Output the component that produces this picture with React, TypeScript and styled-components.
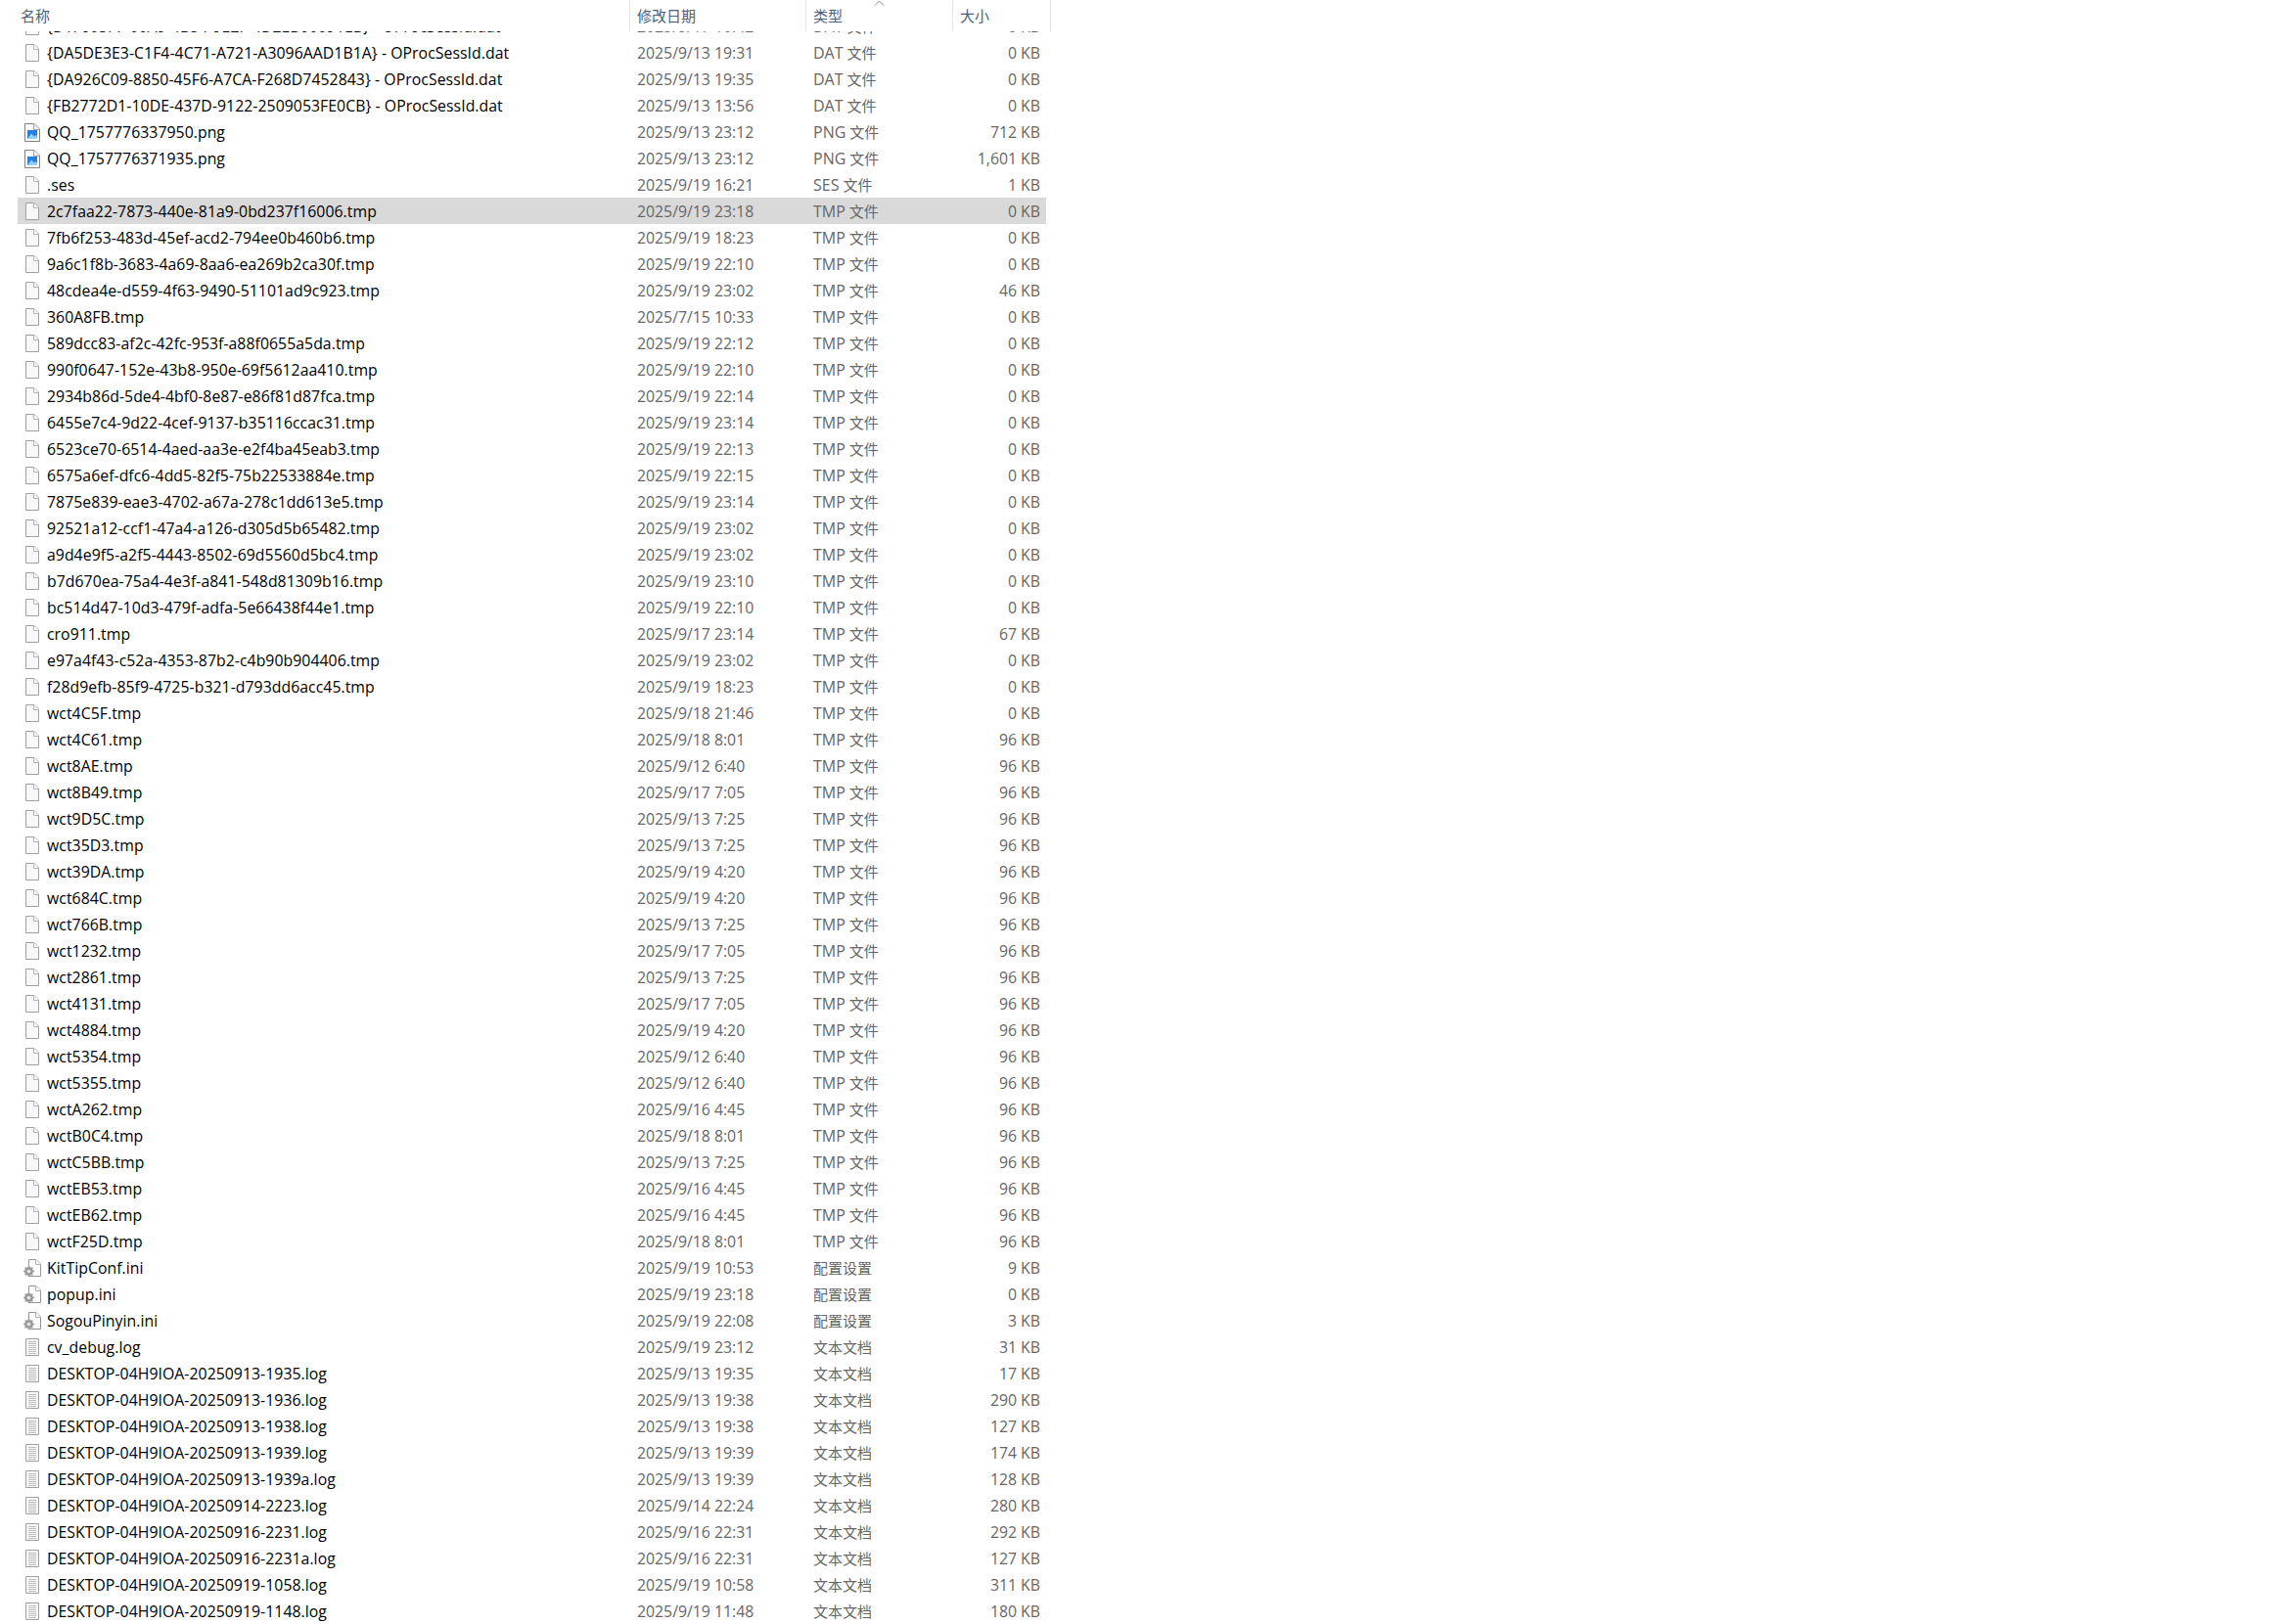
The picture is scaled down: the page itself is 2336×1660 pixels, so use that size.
import React from "react";
import styled, { createGlobalStyle } from "styled-components";

const Global = createGlobalStyle`
  html, body { margin: 0; padding: 0; background: #fff; overflow: hidden; }
  body { font-family: "Open Sans", "Noto Sans CJK SC", sans-serif; }
`;

const COLUMNS = "625px 180px 150px 96px";

const Page = styled.div`
  width: 2336px;
  height: 1660px;
  overflow: hidden;
  background: #fff;
`;

const Header = styled.div`
  position: relative;
  z-index: 1;
  display: grid;
  grid-template-columns: 625px 180px 150px 100px 5px;
  height: 32px;
  width: 1060px;
  margin-left: 18px;
  background: #fff;
`;

const HeaderCell = styled.div<{ $first?: boolean }>`
  position: relative;
  display: flex;
  align-items: center;
  height: 32px;
  box-sizing: border-box;
  padding-left: ${(p) => (p.$first ? "3px" : "7px")};
  padding-bottom: 2px;
  border-left: ${(p) => (p.$first ? "none" : "1px solid #e5e5e5")};
  font-family: "Noto Sans CJK SC", sans-serif;
  font-size: 15px;
  color: #4c607a;
`;

const HeaderEnd = styled.div`
  border-left: 1px solid #e5e5e5;
  height: 32px;
`;

const SortArrow = styled.svg`
  position: absolute;
  top: 0;
  left: 69px;
  width: 11px;
  height: 6px;
`;

const Viewport = styled.div`
  height: 1628px;
  overflow: hidden;
`;

const List = styled.div`
  margin-top: -19px;
  margin-left: 18px;
  width: 1051px;
`;

const Row = styled.div<{ $selected?: boolean }>`
  display: grid;
  grid-template-columns: ${COLUMNS};
  height: 27px;
  align-items: center;
  background: ${(p) => (p.$selected ? "#d9d9d9" : "transparent")};
  font-size: 15.8px;
`;

const NameCell = styled.div`
  display: flex;
  align-items: center;
  gap: 6px;
  padding-left: 6px;
  color: #000;
  letter-spacing: 0.05px;
  white-space: nowrap;
`;

const IconSlot = styled.svg`
  flex: none;
  width: 18px;
  height: 20px;
`;

const DateCell = styled.div`
  padding-left: 8px;
  color: #666;
  white-space: nowrap;
`;

const TypeCell = styled.div`
  display: flex;
  align-items: center;
  gap: 4px;
  padding-left: 8px;
  color: #666;
  font-size: 15px;
  white-space: nowrap;
`;

const TypeCode = styled.span`
  font-size: 16px;
`;

const SizeCell = styled.div`
  padding-right: 6px;
  text-align: right;
  color: #666;
  white-space: nowrap;
`;

type Kind = "blank" | "png" | "ini" | "log";

const Sheet = () => (
  <>
    <path d="M2.5 1.5H11L15.5 6V18.5H2.5Z" fill="#f8f8f8" stroke="#a0a0a0" />
    <path d="M10.5 1.5V6.5H15.5" fill="#fff" stroke="#b4b4b4" />
  </>
);

const FileIcon = ({ kind }: { kind: Kind }) => (
  <IconSlot viewBox="0 0 18 20">
    {kind === "blank" && <Sheet />}
    {kind === "log" && (
      <>
        <path d="M2.5 1.5H15.5V18.5H2.5Z" fill="#f8f8f8" stroke="#a0a0a0" />
        {[4, 6, 8, 10, 12, 14, 16].map((y) => (
          <path key={y} d={`M5 ${y}.5H13`} stroke="#bdbdbd" />
        ))}
      </>
    )}
    {kind === "png" && (
      <>
        <path d="M1.5 1.5H11L16.5 7V19.5H1.5Z" fill="#fff" stroke="#808080" />
        <path d="M10.5 1.5V7.5H16.5" fill="#f2f2f2" stroke="#a0a0a0" />
        <rect x="4" y="8" width="10" height="9" fill="#2a7de1" />
        <path d="M4 17L8 11.5L11 14.5L12.5 13L14 15V17Z" fill="#8fd3fb" />
      </>
    )}
    {kind === "ini" && (
      <>
        <path d="M5.5 1.5H13L17.5 6V18.5H5.5Z" fill="#fcfcfc" stroke="#969696" />
        <path d="M12.5 1.5V6.5H17.5" fill="#fff" stroke="#b0b0b0" />
        <circle cx="5.5" cy="13.5" r="4.4" fill="#8d9092" />
        <path
          d="M5.5 7.8V19.2M-.2 13.5H11.2M1.6 9.6L9.4 17.4M9.4 9.6L1.6 17.4"
          stroke="#9fa2a4"
          strokeWidth="1.5"
        />
        <circle cx="5.5" cy="13.5" r="1.7" fill="#e8e8e8" />
      </>
    )}
  </IconSlot>
);

type FileRow = [string, string, string, string];

const TMP = "TMP 文件";
const TXT = "文本文档";
const CFG = "配置设置";
const DAT = "DAT 文件";

const rows: FileRow[] = [
  ["{D1F603F7-00A9-4B54-9E2F-4D2EB00091EB} - OProcSessId.dat", "2025/9/17 10:42", DAT, "0 KB"],
  ["{DA5DE3E3-C1F4-4C71-A721-A3096AAD1B1A} - OProcSessId.dat", "2025/9/13 19:31", DAT, "0 KB"],
  ["{DA926C09-8850-45F6-A7CA-F268D7452843} - OProcSessId.dat", "2025/9/13 19:35", DAT, "0 KB"],
  ["{FB2772D1-10DE-437D-9122-2509053FE0CB} - OProcSessId.dat", "2025/9/13 13:56", DAT, "0 KB"],
  ["QQ_1757776337950.png", "2025/9/13 23:12", "PNG 文件", "712 KB"],
  ["QQ_1757776371935.png", "2025/9/13 23:12", "PNG 文件", "1,601 KB"],
  [".ses", "2025/9/19 16:21", "SES 文件", "1 KB"],
  ["2c7faa22-7873-440e-81a9-0bd237f16006.tmp", "2025/9/19 23:18", TMP, "0 KB"],
  ["7fb6f253-483d-45ef-acd2-794ee0b460b6.tmp", "2025/9/19 18:23", TMP, "0 KB"],
  ["9a6c1f8b-3683-4a69-8aa6-ea269b2ca30f.tmp", "2025/9/19 22:10", TMP, "0 KB"],
  ["48cdea4e-d559-4f63-9490-51101ad9c923.tmp", "2025/9/19 23:02", TMP, "46 KB"],
  ["360A8FB.tmp", "2025/7/15 10:33", TMP, "0 KB"],
  ["589dcc83-af2c-42fc-953f-a88f0655a5da.tmp", "2025/9/19 22:12", TMP, "0 KB"],
  ["990f0647-152e-43b8-950e-69f5612aa410.tmp", "2025/9/19 22:10", TMP, "0 KB"],
  ["2934b86d-5de4-4bf0-8e87-e86f81d87fca.tmp", "2025/9/19 22:14", TMP, "0 KB"],
  ["6455e7c4-9d22-4cef-9137-b35116ccac31.tmp", "2025/9/19 23:14", TMP, "0 KB"],
  ["6523ce70-6514-4aed-aa3e-e2f4ba45eab3.tmp", "2025/9/19 22:13", TMP, "0 KB"],
  ["6575a6ef-dfc6-4dd5-82f5-75b22533884e.tmp", "2025/9/19 22:15", TMP, "0 KB"],
  ["7875e839-eae3-4702-a67a-278c1dd613e5.tmp", "2025/9/19 23:14", TMP, "0 KB"],
  ["92521a12-ccf1-47a4-a126-d305d5b65482.tmp", "2025/9/19 23:02", TMP, "0 KB"],
  ["a9d4e9f5-a2f5-4443-8502-69d5560d5bc4.tmp", "2025/9/19 23:02", TMP, "0 KB"],
  ["b7d670ea-75a4-4e3f-a841-548d81309b16.tmp", "2025/9/19 23:10", TMP, "0 KB"],
  ["bc514d47-10d3-479f-adfa-5e66438f44e1.tmp", "2025/9/19 22:10", TMP, "0 KB"],
  ["cro911.tmp", "2025/9/17 23:14", TMP, "67 KB"],
  ["e97a4f43-c52a-4353-87b2-c4b90b904406.tmp", "2025/9/19 23:02", TMP, "0 KB"],
  ["f28d9efb-85f9-4725-b321-d793dd6acc45.tmp", "2025/9/19 18:23", TMP, "0 KB"],
  ["wct4C5F.tmp", "2025/9/18 21:46", TMP, "0 KB"],
  ["wct4C61.tmp", "2025/9/18 8:01", TMP, "96 KB"],
  ["wct8AE.tmp", "2025/9/12 6:40", TMP, "96 KB"],
  ["wct8B49.tmp", "2025/9/17 7:05", TMP, "96 KB"],
  ["wct9D5C.tmp", "2025/9/13 7:25", TMP, "96 KB"],
  ["wct35D3.tmp", "2025/9/13 7:25", TMP, "96 KB"],
  ["wct39DA.tmp", "2025/9/19 4:20", TMP, "96 KB"],
  ["wct684C.tmp", "2025/9/19 4:20", TMP, "96 KB"],
  ["wct766B.tmp", "2025/9/13 7:25", TMP, "96 KB"],
  ["wct1232.tmp", "2025/9/17 7:05", TMP, "96 KB"],
  ["wct2861.tmp", "2025/9/13 7:25", TMP, "96 KB"],
  ["wct4131.tmp", "2025/9/17 7:05", TMP, "96 KB"],
  ["wct4884.tmp", "2025/9/19 4:20", TMP, "96 KB"],
  ["wct5354.tmp", "2025/9/12 6:40", TMP, "96 KB"],
  ["wct5355.tmp", "2025/9/12 6:40", TMP, "96 KB"],
  ["wctA262.tmp", "2025/9/16 4:45", TMP, "96 KB"],
  ["wctB0C4.tmp", "2025/9/18 8:01", TMP, "96 KB"],
  ["wctC5BB.tmp", "2025/9/13 7:25", TMP, "96 KB"],
  ["wctEB53.tmp", "2025/9/16 4:45", TMP, "96 KB"],
  ["wctEB62.tmp", "2025/9/16 4:45", TMP, "96 KB"],
  ["wctF25D.tmp", "2025/9/18 8:01", TMP, "96 KB"],
  ["KitTipConf.ini", "2025/9/19 10:53", CFG, "9 KB"],
  ["popup.ini", "2025/9/19 23:18", CFG, "0 KB"],
  ["SogouPinyin.ini", "2025/9/19 22:08", CFG, "3 KB"],
  ["cv_debug.log", "2025/9/19 23:12", TXT, "31 KB"],
  ["DESKTOP-04H9IOA-20250913-1935.log", "2025/9/13 19:35", TXT, "17 KB"],
  ["DESKTOP-04H9IOA-20250913-1936.log", "2025/9/13 19:38", TXT, "290 KB"],
  ["DESKTOP-04H9IOA-20250913-1938.log", "2025/9/13 19:38", TXT, "127 KB"],
  ["DESKTOP-04H9IOA-20250913-1939.log", "2025/9/13 19:39", TXT, "174 KB"],
  ["DESKTOP-04H9IOA-20250913-1939a.log", "2025/9/13 19:39", TXT, "128 KB"],
  ["DESKTOP-04H9IOA-20250914-2223.log", "2025/9/14 22:24", TXT, "280 KB"],
  ["DESKTOP-04H9IOA-20250916-2231.log", "2025/9/16 22:31", TXT, "292 KB"],
  ["DESKTOP-04H9IOA-20250916-2231a.log", "2025/9/16 22:31", TXT, "127 KB"],
  ["DESKTOP-04H9IOA-20250919-1058.log", "2025/9/19 10:58", TXT, "311 KB"],
  ["DESKTOP-04H9IOA-20250919-1148.log", "2025/9/19 11:48", TXT, "180 KB"],
];

const kindOf = (name: string): Kind => {
  if (name.endsWith(".png")) return "png";
  if (name.endsWith(".ini")) return "ini";
  if (name.endsWith(".log")) return "log";
  return "blank";
};

const TypeLabel = ({ type }: { type: string }) => {
  const parts = type.split(" ");
  return (
    <TypeCell>
      {parts.length > 1 && <TypeCode>{parts[0]}</TypeCode>}
      {parts[parts.length - 1]}
    </TypeCell>
  );
};

export default function App() {
  return (
    <Page>
      <Global />
      <Header>
        <HeaderCell $first>名称</HeaderCell>
        <HeaderCell>修改日期</HeaderCell>
        <HeaderCell>
          类型
          <SortArrow viewBox="0 0 11 6">
            <path d="M1 5.5L5.5 1L10 5.5" fill="none" stroke="#8a8a8a" />
          </SortArrow>
        </HeaderCell>
        <HeaderCell>大小</HeaderCell>
        <HeaderEnd />
      </Header>
      <Viewport>
        <List>
          {rows.map(([name, date, type, size]) => (
            <Row key={name} $selected={name.startsWith("2c7faa22")}>
              <NameCell>
                <FileIcon kind={kindOf(name)} />
                {name}
              </NameCell>
              <DateCell>{date}</DateCell>
              <TypeLabel type={type} />
              <SizeCell>{size}</SizeCell>
            </Row>
          ))}
        </List>
      </Viewport>
    </Page>
  );
}
